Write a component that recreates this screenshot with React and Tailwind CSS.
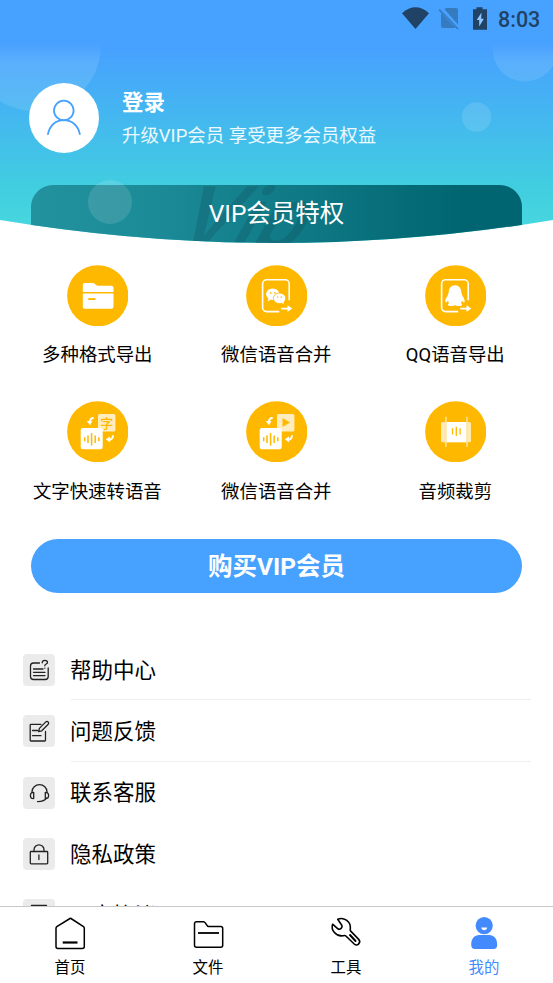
const AMBER = '#ffb800';

function Disc({ children }) {
  return (
    <svg className="size-[61.5px]" viewBox="0 0 61.5 61.5" fill="none">
      <circle cx="30.75" cy="30.75" r="30.6" fill={AMBER} />
      {children}
    </svg>
  );
}

function ExportFrame() {
  return (
    <g>
      <path d="M43.2 35.3V18.8a4 4 0 0 0-4-4H20.6a4 4 0 0 0-4 4v23.8a4 4 0 0 0 4 4h12.6" stroke="#fff" strokeWidth="1.6" />
      <path d="M35.2 42.7h6.3v-2.4l4.8 3.3-4.8 3.3v-2.3h-6.3z" fill="#fff" />
    </g>
  );
}

function SwapTiles({ children }) {
  return (
    <g>
      <rect x="31" y="13" width="17.4" height="17.4" rx="1.5" fill="#ffedc0" />
      {children}
      <rect x="13.7" y="27" width="22" height="21.3" rx="2.2" fill="#fff" />
      <path d="M17.7 36.3v4M21 34.5v7.6M24.6 32v12.6M28.2 34.5v7.6M31.8 36.3v4" stroke={AMBER} strokeWidth="1.5" />
      <path d="M26.700 17c-2.600 0-3.800 1.800-3.900 4.200" stroke="#fff" strokeWidth="2" />
      <path d="M19.700 20h5.700l-2.300 4.300z" fill="#fff" />
      <path d="M46 34.300c0 2.800-1.200 4.200-3.600 4.500" stroke="#fff" strokeWidth="2" />
      <path d="M43 35.600v5.700l-4.300-3z" fill="#fff" />
    </g>
  );
}

const FolderDisc = () => (
  <Disc>
    <path d="M15.8 26.9v-7a2 2 0 0 1 2-2h8.6c1.3 0 2.8 2.8 4.2 2.8h13.9a2 2 0 0 1 2 2v4.2z" fill="#fff" />
    <path d="M15.800 28.500h30.700v13.300a2 2 0 0 1-2 2H17.800a2 2 0 0 1-2-2z" fill="#fff" />
    <path d="M21.2 34.1h7.3" stroke={AMBER} strokeWidth="1.9" />
  </Disc>
);

const WechatDisc = () => (
  <Disc>
    <ExportFrame />
    <path d="M22.2 33.3l-.4 3 3-1.5z" fill="#fff" />
    <ellipse cx="26.7" cy="29.2" rx="6.6" ry="5.8" fill="#fff" />
    <ellipse cx="33.5" cy="33.3" rx="6.2" ry="5.3" fill="#fff" stroke={AMBER} strokeWidth=".8" />
    <path d="M35.5 37.5l2.2 1.7v-3z" fill="#fff" />
    <circle cx="24.7" cy="27.8" r=".9" fill={AMBER} />
    <circle cx="29" cy="27.8" r=".9" fill={AMBER} />
    <circle cx="31.6" cy="32" r=".8" fill={AMBER} />
    <circle cx="35.3" cy="32" r=".8" fill={AMBER} />
  </Disc>
);

const QQDisc = () => (
  <Disc>
    <ExportFrame />
    <path
      d="M30 20.2c-4 0-6.2 3-6.2 6.6 0 1.200-.8 1.700-.8 3 0 .7-2.700 3.900-2.700 6.100 0 .9.300 1.500.7 1.500.7 0 1.300-.9 1.900-1.700.3 1 .7 1.800 1.300 2.500-.9.400-1.300.8-1.300 1.400 0 1.100 1.500 1.500 3.300 1.500 1.700 0 3-.5 3.800-1.200.8.700 2.100 1.200 3.800 1.200 1.800 0 3.300-.4 3.300-1.500 0-.6-.4-1-1.300-1.400.6-.7 1-1.500 1.300-2.500.6.800 1.200 1.700 1.900 1.700.4 0 .7-.6.7-1.500 0-2.200-2.700-5.400-2.700-6.100 0-1.300-.8-1.800-.8-3 0-3.600-2.200-6.600-6.200-6.600z"
      fill="#fff"
    />
  </Disc>
);

const TextToSpeechDisc = () => (
  <Disc>
    <SwapTiles>
      <text x="39.8" y="26.500" textAnchor="middle" fontSize="13" fontWeight="500" fill={AMBER}>字</text>
    </SwapTiles>
  </Disc>
);

const MergeDisc = () => (
  <Disc>
    <SwapTiles>
      <path d="M36.800 17.600v7.800l6.800-3.900z" fill={AMBER} stroke={AMBER} strokeWidth=".6" strokeLinejoin="round" />
    </SwapTiles>
  </Disc>
);

const TrimDisc = () => (
  <Disc>
    <rect x="16" y="21" width="30" height="20.200" rx="1.500" fill="#ffe9b3" />
    <path d="M21 21h21v20.200H21z" fill="#fff" />
    <path d="M20.900 15.700v30.200M42 15.700v30.200" stroke="#ffe4a0" strokeWidth="1.500" />
    <path d="M27.500 27.300v6.200M31.300 25.800v9.200M35.100 27.300v6.200" stroke={AMBER} strokeWidth="1.300" />
  </Disc>
);

const FEATURES = [
  ['多种格式导出', FolderDisc],
  ['微信语音合并', WechatDisc],
  ['QQ语音导出', QQDisc],
  ['文字快速转语音', TextToSpeechDisc],
  ['微信语音合并', MergeDisc],
  ['音频裁剪', TrimDisc],
];

const MENU = [
  {
    label: '帮助中心',
    divider: true,
    icon: (
      <>
        <path d="M16.500 9H10.500a3 3 0 0 0-3 3v10.500a3 3 0 0 0 3 3h11.700a3 3 0 0 0 3-3V14" />
        <path d="M10.500 15h9.500M10.500 18.300h11.500M10.500 21.600h11.500" />
        <path d="M19.200 8.800c0-1.600 1-2.500 2.600-2.500s2.700.9 2.700 2.200c0 1.700-2.700 1.400-2.700 3.300M21.800 14.100v.1" />
      </>
    ),
  },
  {
    label: '问题反馈',
    divider: true,
    icon: (
      <>
        <path d="M18 9.300H8a.8.800 0 0 0-.8.8v15.100a.8.800 0 0 0 .8.800h13.700a.8.800 0 0 0 .8-.8V16.500M9.500 15.500h5M9.500 20.700h8.500" />
        <path d="M22.800 6.900a1.700 1.700 0 0 1 2.400 2.400l-6.400 6.500-3.200.9.800-3.300z" />
      </>
    ),
  },
  {
    label: '联系客服',
    icon: (
      <>
        <path d="M9 15.500v-.8a7.500 7.100 0 0 1 15 0v.8M23.500 21c-1.200 2.300-4 3.500-9 3.600" />
        <path d="M10.700 15.300v6.300c-2 0-3.300-1.300-3.300-3.200s1.300-3.100 3.300-3.100zM22.300 15.300v6.300c2 0 3.300-1.300 3.300-3.200s-1.300-3.100-3.300-3.100z" />
      </>
    ),
  },
  {
    label: '隐私政策',
    icon: (
      <>
        <rect x="7.300" y="13.500" width="17.400" height="12.300" rx=".8" />
        <path d="M11 13.500v-1.700a5 5 0 0 1 10 0v1.700M15.900 17v4.500" />
      </>
    ),
  },
  {
    label: '用户协议',
    icon: <path d="M8.500 6.500h15v19h-15zM12 12h8M12 16h8" />,
  },
];

const TABS = [
  {
    label: '首页',
    icon: (
      <>
        <path d="M17 2.500 3.800 10.700a1.800 1.800 0 0 0-.8 1.500v18.300a2 2 0 0 0 2 2h24.300a2 2 0 0 0 2-2V12.200a1.800 1.800 0 0 0-.8-1.500L18 2.500a1 1 0 0 0-1 0z" strokeWidth="1.500" />
        <path d="M9.700 26.500h14.800" strokeWidth="2.200" strokeLinecap="butt" />
      </>
    ),
  },
  {
    label: '文件',
    icon: (
      <>
        <path d="M3.500 7.700a2 2 0 0 1 2-2h7.200c2.300 0 2.600 4.900 5 4.900h12a2 2 0 0 1 2 2v16.600a2 2 0 0 1-2 2H5.500a2 2 0 0 1-2-2z" strokeWidth="1.500" />
        <path d="M7 17h21" strokeWidth="1.800" strokeLinecap="butt" />
      </>
    ),
  },
  {
    label: '工具',
    icon: (
      <>
        <path
          d="M8.700 3.300c6-2.500 13 2 12.700 8.700-.1 1.400-.5 2.200.1 2.900l8.200 8.500c2.700 3-1.200 7.300-4.500 4.600l-8.300-8c-.9-.9-1.700-.5-3-.2C7 20.800 1.600 14 3.600 8.200l5.300 4.600c2.300 1.400 5-1.300 3.900-3.600z"
          strokeWidth="1.600"
        />
        <path d="M21 19l5.500 6" strokeWidth="2" />
      </>
    ),
  },
  {
    label: '我的',
    active: true,
    icon: (
      <>
        <circle cx="17.200" cy="9.600" r="8.600" fill="#448aff" stroke="none" />
        <path d="M14.300 11.500h5.800c-.2 3.600-5.600 3.600-5.800 0z" fill="#fff" stroke="none" />
        <path d="M4.200 28.700c0-6 3.300-9.600 8-9.600h10c4.700 0 8 3.600 8 9.600 0 3-1.400 4.300-3.500 4.300h-19c-2.100 0-3.500-1.300-3.500-4.300z" fill="#448aff" stroke="none" />
      </>
    ),
  },
];

function StatusBar() {
  return (
    <div className="flex h-[38px] items-center justify-end pr-[12px] text-[#1f4265]">
      <svg className="h-[38px] w-[94px]" viewBox="0 0 94 38" fill="none">
        <path d="M7 13.200Q20.500 1.500 34 13.200L20.500 29z" fill="currentColor" />
        <path d="M49.500 9.300 51 8h10a2 2 0 0 1 2 2v14.500zM46 13l14.500 15H48a2 2 0 0 1-2-2z" fill="#367bbf" />
        <path d="M44.200 9.700 63 29" stroke="#367bbf" strokeWidth="1.700" />
        <path d="M81.500 7.200h6v2H92v20.500H78V9.200h3.500z" fill="currentColor" />
        <path d="M86.500 12.500l-4.800 7.500h2.500v6.500l4.700-7.800h-2.700z" fill="#8fc6ff" />
      </svg>
      <span className="ml-[9px] w-[43px] pt-[2px] text-[21.500px] leading-[38px] font-medium">8:03</span>
    </div>
  );
}

function Header() {
  return (
    <header className="relative h-[244px] shrink-0 overflow-hidden bg-[linear-gradient(180deg,#47a1ff_0px,#47a1ff_48px,#41cee0_188px,#46d6df_222px)] [clip-path:path('M0_0H553V220Q276.5_266_0_220Z')]">
      <svg className="absolute inset-0 h-[244px] w-[553px]" viewBox="0 0 553 244">
        <defs>
          <linearGradient id="fade" gradientUnits="userSpaceOnUse" x1="0" y1="42" x2="0" y2="62">
            <stop offset="0" stopColor="#fff" stopOpacity="0" />
            <stop offset="1" stopColor="#fff" stopOpacity=".11" />
          </linearGradient>
        </defs>
        <circle cx="35" cy="45" r="66" fill="url(#fade)" />
        <circle cx="525" cy="49" r="32.500" fill="url(#fade)" />
        <circle cx="476.500" cy="117" r="14.700" fill="#fff" fillOpacity=".12" />
      </svg>
      <div className="relative">
        <StatusBar />
        <div className="flex items-center pt-[45px] pl-[29px]">
          <div className="flex size-[70px] items-center justify-center rounded-full bg-white">
            <svg className="size-[70px]" viewBox="0 0 70 70" fill="none" stroke="#47a1ff" strokeWidth="1.800" strokeLinecap="round">
              <circle cx="34.800" cy="27.500" r="9.800" />
              <path d="M19 51.200c1.500-8.500 7.500-14 15.800-14s14.500 5.500 16 14" />
            </svg>
          </div>
          <div className="ml-[23px] pt-[2px] text-white">
            <div className="text-[21.500px] leading-[32px] font-bold">登录</div>
            <div className="mt-[2px] text-[18.450px] leading-[30px] text-white/90">升级VIP会员 享受更多会员权益</div>
          </div>
        </div>
        <div className="relative mx-[31px] mt-[32px] h-[70px]">
          <div className="h-full overflow-hidden rounded-t-[22px] bg-[linear-gradient(90deg,#23929f_0%,#1c8b98_25%,#006570_88%)]">
            <svg className="absolute inset-0 h-[70px] w-[491px]" viewBox="0 0 491 70">
              <text transform="translate(138 63) skewX(-29)" fontSize="87" fontWeight="500" fill="#10404f" fillOpacity=".22">Vip</text>
            </svg>
            <div className="relative text-center text-[24.500px] leading-[58px] text-white">VIP会员特权</div>
          </div>
          <span className="absolute top-[-5px] left-[57px] size-[44px] rounded-full bg-white/12" />
        </div>
      </div>
    </header>
  );
}

export default function App() {
  return (
    <div className="flex h-[983px] w-[553px] flex-col overflow-hidden bg-white font-[Roboto,'Noto_Sans_CJK_SC',sans-serif] text-black">
      <Header />
      <main className="min-h-0 flex-1 overflow-hidden">
        <section className="grid grid-cols-3 pr-[8.200px] pl-[7.800px] pt-[20.500px]">
          {FEATURES.map(([label, Icon], i) => (
            <div key={i} className="flex h-[136.300px] flex-col items-center">
              <Icon />
              <span className="mt-[13.300px] text-[18.400px] leading-[32px] whitespace-nowrap">{label}</span>
            </div>
          ))}
        </section>
        <div className="px-[31px] pt-[2px]">
          <button className="block h-[54px] w-full rounded-full bg-[#47a1ff] text-center text-[24.500px] leading-[56px] font-bold text-white">购买VIP会员</button>
        </div>
        <section className="pt-[46px] pl-[23px]">
          {MENU.map(({ label, icon, divider }) => (
            <div key={label} className="flex h-[61.400px] items-stretch">
              <div className="flex items-center">
                <svg className="size-[32px] rounded-[4px] bg-[#ebebeb]" viewBox="0 0 32 32" fill="none" stroke="#222" strokeWidth="1.300" strokeLinejoin="round" strokeLinecap="round">
                  {icon}
                </svg>
              </div>
              <div className={`ml-[15px] flex items-center pt-[2px] text-[21.500px] ${divider ? 'w-[461px] bg-[linear-gradient(#efefef,#efefef)] bg-[length:460px_1px] bg-[position:right_bottom] bg-no-repeat' : ''}`}>{label}</div>
            </div>
          ))}
        </section>
      </main>
      <nav className="grid h-[77px] shrink-0 grid-cols-4 border-t border-[#c8c8c8] bg-white pl-[1px]">
        {TABS.map(({ label, icon, active }) => (
          <div key={label} className={`flex flex-col items-center pt-[9px] text-[15.400px] ${active ? 'text-[#448aff]' : 'text-black'}`}>
            <svg className="size-[35px]" viewBox="0 0 35 35" fill="none" stroke="#000" strokeLinejoin="round" strokeLinecap="round">
              {icon}
            </svg>
            <span className="mt-[5px] leading-[24px]">{label}</span>
          </div>
        ))}
      </nav>
    </div>
  );
}
